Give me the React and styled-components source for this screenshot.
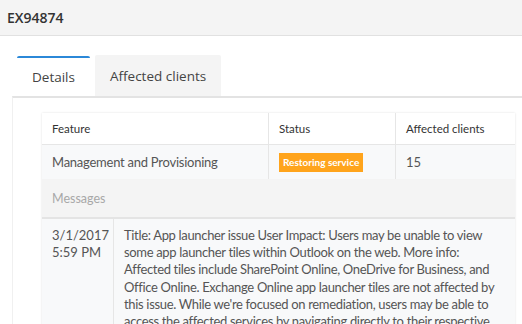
import React from 'react';
import styled, { createGlobalStyle } from 'styled-components';

const GlobalStyle = createGlobalStyle`
  body {
    margin: 0;
    font-family: "Open Sans", "Noto Sans", sans-serif;
    color: #444;
    background: #fff;
    overflow: hidden;
  }
`;

const Header = styled.div`
  height: 35px;
  display: flex;
  align-items: center;
  padding-left: 7px;
  background: #f4f4f4;
  border-bottom: 1px solid #e1e1e1;
  font-size: 14px;
  font-weight: 600;
  color: #333;
`;

const Main = styled.div`
  padding: 19px 0 0 12px;
`;

const Tabs = styled.div`
  display: flex;
  gap: 5px;
  padding-left: 5px;
  align-items: flex-end;
`;

const Tab = styled.div`
  height: ${(p) => (p.active ? '38px' : '41px')};
  padding: 0 15px;
  display: flex;
  align-items: center;
  font-size: 13.5px;
  color: #444;
  background: ${(p) => (p.active ? '#fff' : '#f4f4f4')};
  border-top: ${(p) => (p.active ? '2px solid #2b88d8' : 'none')};
  border-radius: 2px 2px 0 0;
`;

const Panel = styled.div`
  border-top: 2px solid #e3e3e3;
  border-left: 1px solid #f0f0f0;
  padding: 15px 7px 0 29px;
`;

const Table = styled.div`
  width: 473px;
  font-family: Lato, "Open Sans", sans-serif;
  box-shadow: 0 0 2px rgba(0, 0, 0, 0.12);
`;

const Row = styled.div`
  display: grid;
  grid-template-columns: ${(p) => p.cols};
  min-height: ${(p) => p.h || 0}px;
  background: ${(p) => p.bg || '#fff'};
  border-bottom: ${(p) => p.border || '1px solid #e6e6e6'};
`;

const Cell = styled.div`
  display: flex;
  align-items: ${(p) => (p.top ? 'flex-start' : 'center')};
  padding: ${(p) => (p.top ? '8px 10px 0 10px' : '0 10px')};
  font-size: ${(p) => p.size || 13}px;
  letter-spacing: ${(p) => p.ls || 0}px;
  line-height: ${(p) => (p.top ? '17.2px' : 'normal')};
  color: ${(p) => p.color || '#555'};
  border-left: ${(p) => (p.first ? 'none' : '1px solid #e6e6e6')};
`;

const Badge = styled.span`
  display: inline-block;
  background: #ffa41c;
  color: #fff;
  font-size: 10px;
  font-weight: 700;
  padding: 2px 4px 3px;
  line-height: 14px;
`;

const COLS = '226px 127px 120px';

export default function App() {
  return (
    <>
      <GlobalStyle />
      <Header>EX94874</Header>
      <Main>
        <Tabs>
          <Tab active>Details</Tab>
          <Tab>Affected clients</Tab>
        </Tabs>
        <Panel>
          <Table>
            <Row cols={COLS} h={31}>
              <Cell first size={11.5} color="#333">Feature</Cell>
              <Cell size={11.5} color="#333">Status</Cell>
              <Cell size={11.5} color="#333">Affected clients</Cell>
            </Row>
            <Row cols={COLS} h={34} bg="#f8f9fa" border="none">
              <Cell first size={13} ls={-0.25}>Management and Provisioning</Cell>
              <Cell>
                <Badge>Restoring service</Badge>
              </Cell>
              <Cell size={13}>15</Cell>
            </Row>
            <Row cols="1fr" h={38} bg="#f4f4f4" border="2px solid #e4e4e4">
              <Cell first size={12.5} color="#a8a8a8">Messages</Cell>
            </Row>
            <Row cols="71px 1fr" h={120} bg="#f8f9fa" border="none">
              <Cell first top>3/1/2017<br />5:59 PM</Cell>
              <Cell top ls={-0.33}>
                Title: App launcher issue User Impact: Users may be unable to view some app
                launcher tiles within Outlook on the web. More info: Affected tiles include
                SharePoint Online, OneDrive for Business, and Office Online. Exchange Online app
                launcher tiles are not affected by this issue. While we're focused on
                remediation, users may be able to access the affected services by navigating
                directly to their respective URLs.
              </Cell>
            </Row>
          </Table>
        </Panel>
      </Main>
    </>
  );
}
